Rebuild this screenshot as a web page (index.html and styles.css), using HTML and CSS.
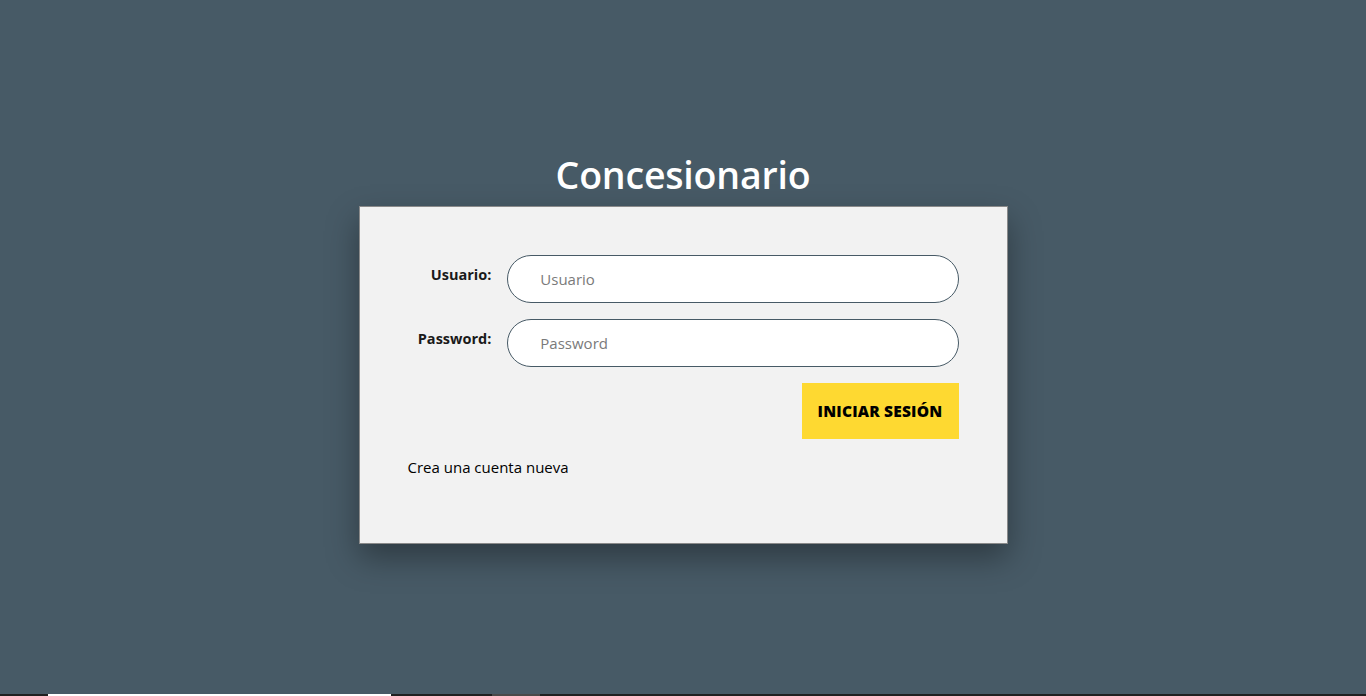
FILE: index.html
```html
<!DOCTYPE html>
<html lang="es">
<head>
<meta charset="utf-8">
<title>Concesionario</title>
<link rel="stylesheet" href="styles.css">
</head>
<body>
<main class="page">
  <h1 class="title">Concesionario</h1>
  <form class="card">
    <div class="row">
      <label class="label" for="u">Usuario:</label>
      <input class="field" id="u" type="text" placeholder="Usuario">
    </div>
    <div class="row">
      <label class="label" for="p">Password:</label>
      <input class="field" id="p" type="password" placeholder="Password">
    </div>
    <div class="actions">
      <button class="btn" type="button">Iniciar sesión</button>
    </div>
    <a class="link" href="#">Crea una cuenta nueva</a>
  </form>
</main>
<div class="taskbar"><span class="seg-white"></span><span class="seg-gray"></span></div>
</body>
</html>
```
FILE: styles.css
```css
* { box-sizing: border-box; }
html, body { height: 100%; }
body {
  margin: 0;
  background: #475a66;
  font-family: "Open Sans", "Noto Sans", sans-serif;
  overflow: hidden;
}
.page {
  height: 100%;
  display: flex;
  flex-direction: column;
  align-items: center;
  justify-content: center;
}
.title {
  margin: 0 0 8px;
  color: #ffffff;
  font-size: 37.5px;
  font-weight: 600;
  line-height: 46px;
  letter-spacing: -0.2px;
}
.card {
  width: 649px;
  background: #f2f2f2;
  border: 1px solid #8a8a8a;
  box-shadow: 0 14px 30px rgba(0, 0, 0, 0.35);
  padding: 48px 48px 66px 48px;
  display: flex;
  flex-direction: column;
}
.row {
  display: flex;
  align-items: center;
  gap: 16px;
  margin-bottom: 16px;
}
.label {
  width: 84px;
  text-align: right;
  font-size: 14.5px;
  font-weight: 700;
  color: #1a1a1a;
  align-self: flex-start;
  padding-top: 10px;
}
.field {
  width: 452px;
  height: 48px;
  border: 1px solid #475a66;
  border-radius: 24px;
  background: #fff;
  padding: 0 32px;
  font-family: inherit;
  font-size: 15px;
  color: #333;
  outline: none;
}
.field::placeholder { color: #7a7a7a; }
.actions {
  display: flex;
  justify-content: flex-end;
}
.btn {
  width: 157px;
  height: 56px;
  border: none;
  background: #fed931;
  color: #000;
  font-family: inherit;
  font-size: 15.5px;
  font-weight: 800;
  text-transform: uppercase;
  letter-spacing: 0.2px;
  cursor: pointer;
}
.link {
  margin-top: 18px;
  font-size: 15px;
  line-height: 20px;
  color: #000;
  text-decoration: none;
}
.taskbar {
  position: fixed;
  left: 0;
  right: 0;
  bottom: 0;
  height: 2px;
  background: #202020;
}
.seg-white {
  position: absolute;
  left: 48px;
  width: 343px;
  height: 2px;
  background: #ffffff;
}
.seg-gray {
  position: absolute;
  left: 492px;
  width: 48px;
  height: 2px;
  background: #4a4a4a;
}
```
